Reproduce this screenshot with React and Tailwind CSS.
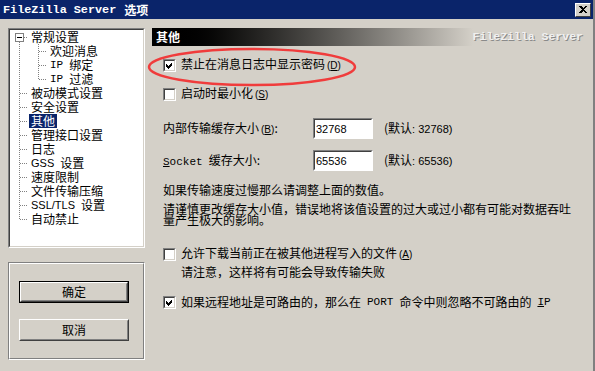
import React from 'react';

const treeItems = [
  { label: '常规设置', level: 0 },
  { label: '欢迎消息', level: 1 },
  { label: <><span className="font-['Liberation_Mono'] text-[11px] mr-[6px]">IP</span>绑定</>, level: 1 },
  { label: <><span className="font-['Liberation_Mono'] text-[11px] mr-[6px]">IP</span>过滤</>, level: 1 },
  { label: '被动模式设置', level: 0 },
  { label: '安全设置', level: 0 },
  { label: '其他', level: 0, selected: true },
  { label: '管理接口设置', level: 0 },
  { label: '日志', level: 0 },
  { label: <><span className="font-['Liberation_Sans'] text-[11px] mr-[6px]">GSS</span>设置</>, level: 0 },
  { label: '速度限制', level: 0 },
  { label: '文件传输压缩', level: 0 },
  { label: <><span className="font-['Liberation_Sans'] text-[11px] mr-[6px]">SSL/TLS</span>设置</>, level: 0 },
  { label: '自动禁止', level: 0 },
];

function Check({ checked }) {
  return (
    <span className="block w-[13px] h-[13px] shrink-0 bg-white border border-t-[#808080] border-l-[#808080] border-b-white border-r-white">
      <span className="block w-full h-full border border-t-[#404040] border-l-[#404040] border-b-[#d4d0c8] border-r-[#d4d0c8]">
        {checked && (
          <svg width="9" height="9" viewBox="0 0 9 9" shapeRendering="crispEdges">
            <polygon points="1,3 3,5 7,1 7,4 3,8 1,6" fill="#000" />
          </svg>
        )}
      </span>
    </span>
  );
}

function Field({ value }) {
  return (
    <div className="w-[60px] h-[21px] bg-white border border-t-[#808080] border-l-[#808080] border-b-white border-r-white">
      <div className="h-full border border-t-[#404040] border-l-[#404040] border-b-white border-r-white pl-[1px] flex items-center text-[11px] font-['Liberation_Sans'] text-black">
        {value}
      </div>
    </div>
  );
}

function Button({ children, isDefault }) {
  return (
    <div className={`w-[110px] h-[22px] ${isDefault ? 'border border-black' : ''}`}>
      <div className="h-full border border-t-white border-l-white border-b-[#404040] border-r-[#404040]">
        <div className="h-full border border-t-[#d4d0c8] border-l-[#d4d0c8] border-b-[#808080] border-r-[#808080] flex items-center justify-center text-[12px]">
          {children}
        </div>
      </div>
    </div>
  );
}

function Key({ k }) {
  return (
    <span className="font-['Liberation_Sans'] text-[10px] ml-[2px]">(<span className="underline">{k}</span>)</span>
  );
}

export default function App() {
  return (
    <div className="w-[595px] h-[371px] bg-[#d4d0c8] overflow-hidden flex flex-col border-r-2 border-r-[#808080] font-['Noto_Sans_CJK_SC',sans-serif] text-black text-[12px] leading-[14px]">
      {/* title bar */}
      <div className="h-[19px] bg-[#0a246a] flex items-center justify-between pl-[3px] pr-[2px]">
        <div className="text-white font-bold flex items-center">
          <span className="font-['Liberation_Mono'] text-[11.8px]">FileZilla Server</span>
          <span className="ml-[8px] text-[12px]">选项</span>
        </div>
        <div className="w-[16px] h-[14px] bg-[#d4d0c8] border border-t-white border-l-white border-b-[#404040] border-r-[#404040] flex items-center justify-center">
          <svg width="8" height="7" viewBox="0 0 8 7" shapeRendering="crispEdges">
            <path d="M0 0h2l2 2 2-2h2L5 3.5 8 7H6L4 5 2 7H0l3-3.5z" fill="#000" />
          </svg>
        </div>
      </div>

      <div className="flex pt-[9px] pl-[8px] gap-[7px]">
        {/* left column */}
        <div className="w-[137px] flex flex-col gap-[14px]">
          <div className="h-[220px] bg-white border border-t-[#808080] border-l-[#808080] border-b-white border-r-white">
            <div className="relative h-full border border-t-[#404040] border-l-[#404040] border-b-[#d4d0c8] border-r-[#d4d0c8]">
              <svg className="absolute left-0 top-0" width="133" height="216" shapeRendering="crispEdges">
                <g stroke="#808080" strokeDasharray="1 1">
                  <line x1="9.5" y1="12" x2="9.5" y2="190" />
                  <line x1="28.5" y1="14" x2="28.5" y2="50" />
                  {[1, 2, 3].map((i) => (
                    <line key={i} x1="29" y1={7.5 + 14 * i} x2="37" y2={7.5 + 14 * i} />
                  ))}
                  {[4, 5, 6, 7, 8, 9, 10, 11, 12, 13].map((i) => (
                    <line key={i} x1="10" y1={7.5 + 14 * i} x2="18" y2={7.5 + 14 * i} />
                  ))}
                  <line x1="14" y1="7.5" x2="18" y2="7.5" />
                </g>
                <rect x="5.5" y="3.5" width="8" height="8" fill="#fff" stroke="#808080" />
                <line x1="7" y1="7.5" x2="12" y2="7.5" stroke="#000" />
              </svg>
              <div className="flex flex-col">
                {treeItems.map((it, i) => (
                  <div key={i} className={`h-[14px] flex items-center ${it.level ? 'pl-[38px]' : 'pl-[19px]'}`}>
                    <span className={`px-[2px] h-[14px] flex items-center whitespace-nowrap ${it.selected ? 'bg-[#0a246a] text-white' : ''}`}>
                      {it.label}
                    </span>
                  </div>
                ))}
              </div>
            </div>
          </div>

          <div className="h-[98px] border border-t-[#808080] border-l-[#808080] border-b-white border-r-white">
            <div className="h-full border border-t-white border-l-white border-b-[#808080] border-r-[#808080] flex flex-col pl-[9px] pt-[17px] gap-[16px]">
              <Button isDefault>确定</Button>
              <Button>取消</Button>
            </div>
          </div>
        </div>

        {/* right column */}
        <div className="relative w-[434px] flex flex-col">
          <div className="h-[18px] bg-gradient-to-r from-black from-[3%] to-[#d4d0c8] to-[74%] flex items-center justify-between pl-[4px] pr-[3px]">
            <span className="text-white font-bold">其他</span>
            <span className="font-['Liberation_Mono'] font-bold text-[11.5px] text-[#f0f0f0] [text-shadow:1px_1px_0_#8a8a8a]">FileZilla Server</span>
          </div>

          <div className="flex flex-col pl-[11px]">
            <div className="h-[16px] mt-[11px] flex items-center gap-[5px]">
              <Check checked />
              <span>禁止在消息日志中显示密码<Key k="D" /></span>
            </div>
            <div className="h-[16px] mt-[13px] flex items-center gap-[5px]">
              <Check />
              <span>启动时最小化<Key k="S" /></span>
            </div>

            <div className="h-[21px] mt-[16px] flex items-center">
              <span className="w-[150px]">内部传输缓存大小<Key k="B" />:</span>
              <Field value="32768" />
              <span className="ml-[11px]">(默认<span className="font-['Liberation_Sans'] text-[11px]">: 32768)</span></span>
            </div>
            <div className="h-[21px] mt-[11px] flex items-center">
              <span className="w-[150px]"><span className="font-['Liberation_Mono'] text-[11px] mr-[6px]"><span className="underline">S</span>ocket</span>缓存大小:</span>
              <Field value="65536" />
              <span className="ml-[11px]">(默认<span className="font-['Liberation_Sans'] text-[11px]">: 65536)</span></span>
            </div>

            <div className="h-[14px] mt-[12px] flex items-center">如果传输速度过慢那么请调整上面的数值。</div>
            <div className="w-[412px] mt-[6px] leading-[11px]">
              请谨慎更改缓存大小值，错误地将该值设置的过大或过小都有可能对数据吞吐量产生极大的影响。
            </div>

            <div className="h-[16px] mt-[21px] flex items-center gap-[5px]">
              <Check />
              <span>允许下载当前正在被其他进程写入的文件<Key k="A" /></span>
            </div>
            <div className="h-[14px] mt-[3px] pl-[18px] flex items-center">请注意，这样将有可能会导致传输失败</div>

            <div className="h-[16px] mt-[15px] flex items-center gap-[5px]">
              <Check checked />
              <span className="whitespace-nowrap flex items-center">
                如果远程地址是可路由的，那么在
                <span className="font-['Liberation_Mono'] text-[11px] mx-[6px]">PORT</span>
                命令中则忽略不可路由的
                <span className="font-['Liberation_Mono'] text-[11px] ml-[6px]"><span className="underline">I</span>P</span>
              </span>
            </div>
          </div>

          {/* red annotation ellipse */}
          <svg className="absolute left-[-6px] top-[18px] pointer-events-none" width="214" height="44" viewBox="0 0 214 44">
            <ellipse cx="106" cy="21" rx="103" ry="18" fill="none" stroke="#f03c3c" strokeWidth="2.5" />
          </svg>
        </div>
      </div>
    </div>
  );
}
